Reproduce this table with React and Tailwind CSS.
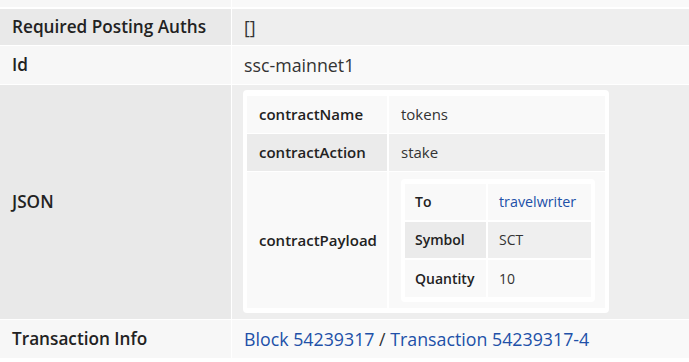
import React from "react";

const font = { fontFamily: '"Open Sans", "Noto Sans", sans-serif' };

function Row({ label, children, gray, h }) {
  return (
    <div className={`grid grid-cols-[231px_1fr] gap-x-[1px] ${h}`}>
      <div className={`flex items-center pl-3 font-semibold text-[17.2px] text-[#222] ${gray ? "bg-[#e9e9e9]" : "bg-[#f7f7f7]"}`}>
        {label}
      </div>
      <div className={`flex items-center pl-3 text-[17.8px] text-[#333] ${gray ? "bg-[#eeeeee]" : "bg-[#f9f9f9]"}`}>
        {children}
      </div>
    </div>
  );
}

export default function App() {
  return (
    <div className="w-[689px] h-[362px] bg-white overflow-hidden" style={font}>
      <div className="flex flex-col gap-y-[1px]">
        <div className="grid grid-cols-[231px_1fr] gap-x-[1px] h-[7px] mb-[1px]">
          <div className="bg-[#f7f7f7]" />
          <div className="bg-[#f9f9f9]" />
        </div>
        <Row label="Required Posting Auths" gray h="h-[36px]">[]</Row>
        <Row label="Id" h="h-[38px]">ssc-mainnet1</Row>
        <div className="grid grid-cols-[231px_1fr] gap-x-[1px] h-[234px]">
          <div className="flex items-center pl-3 font-semibold text-[17.2px] text-[#222] bg-[#e9e9e9]">JSON</div>
          <div className="bg-[#eeeeee] pl-[11px] pt-[5px]">
            <div className="w-[366px] h-[223px] bg-white rounded-[4px] pl-[4px] pr-[4px] pt-[6px] pb-[5px]">
              <div className="flex flex-col gap-y-[1px] text-[15px]">
                <div className="grid grid-cols-[140px_1fr] gap-x-[2px] h-[37px]">
                  <div className="bg-[#f9f9f9] flex items-center pl-3 font-semibold text-[#222]">contractName</div>
                  <div className="bg-[#f9f9f9] flex items-center pl-3 text-[#333]">tokens</div>
                </div>
                <div className="grid grid-cols-[140px_1fr] gap-x-[2px] h-[37px]">
                  <div className="bg-[#ebebeb] flex items-center pl-3 font-semibold text-[#222]">contractAction</div>
                  <div className="bg-[#efefef] flex items-center pl-3 text-[#333]">stake</div>
                </div>
                <div className="grid grid-cols-[140px_1fr] gap-x-[2px] h-[136px]">
                  <div className="bg-[#f9f9f9] flex items-center pl-3 font-semibold text-[#222]">contractPayload</div>
                  <div className="bg-[#f9f9f9] flex items-center pl-3">
                    <div className="bg-white rounded-[4px] px-[4px] pt-[5px] pb-[5px] text-[14px]">
                      <div className="flex flex-col gap-y-[2px]">
                        <div className="grid grid-cols-[81px_103px] gap-x-[2px] h-[36px]">
                          <div className="bg-[#f9f9f9] flex items-center pl-[10px] font-semibold text-[#222]">To</div>
                          <div className="bg-[#f9f9f9] flex items-center pl-[11px] text-[14.3px] text-[#2150a8]">travelwriter</div>
                        </div>
                        <div className="grid grid-cols-[81px_103px] gap-x-[2px] h-[36px]">
                          <div className="bg-[#ebebeb] flex items-center pl-[10px] font-semibold text-[#222]">Symbol</div>
                          <div className="bg-[#efefef] flex items-center pl-[11px] text-[#333]">SCT</div>
                        </div>
                        <div className="grid grid-cols-[81px_103px] gap-x-[2px] h-[37px]">
                          <div className="bg-[#f9f9f9] flex items-center pl-[10px] font-semibold text-[#222]">Quantity</div>
                          <div className="bg-[#f9f9f9] flex items-center pl-[11px] text-[#333]">10</div>
                        </div>
                      </div>
                    </div>
                  </div>
                </div>
              </div>
            </div>
          </div>
        </div>
        <Row label="Transaction Info" h="h-[38px]">
          <span className="text-[#2150a8]">Block 54239317</span>
          <span className="text-[#333]">&nbsp;/&nbsp;</span>
          <span className="text-[#2150a8]">Transaction 54239317-4</span>
        </Row>
      </div>
    </div>
  );
}
